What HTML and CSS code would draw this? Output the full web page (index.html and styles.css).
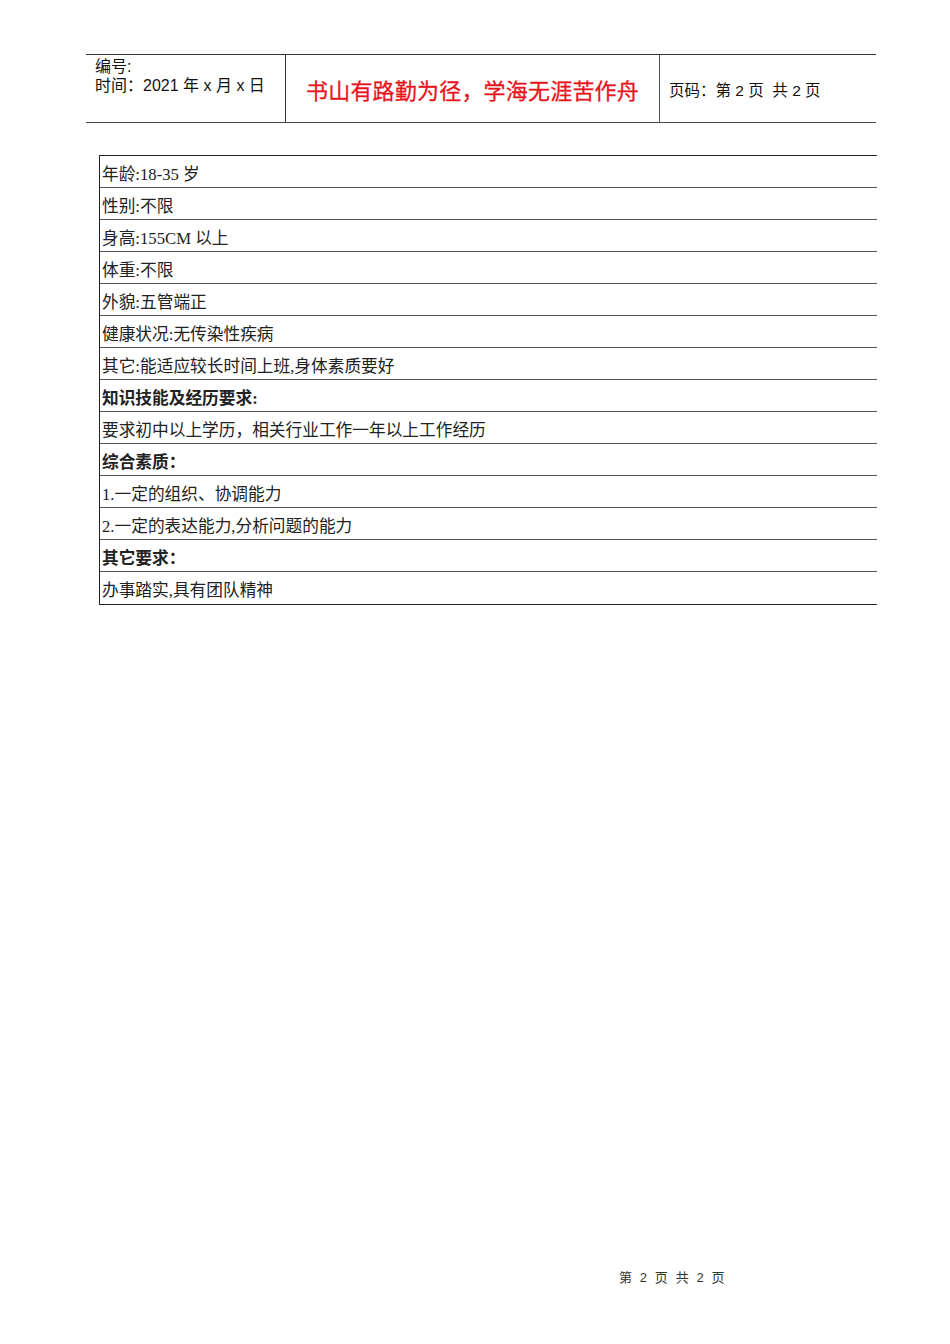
FILE: index.html
```html
<!DOCTYPE html>
<html lang="zh">
<head>
<meta charset="utf-8">
<link rel="stylesheet" href="styles.css">
</head>
<body>
<div class="page">
  <div class="header">
    <div class="cell cell-left">
      <div>编号:</div>
      <div>时间：2021 年 x 月 x 日</div>
    </div>
    <div class="cell cell-mid">书山有路勤为径，学海无涯苦作舟</div>
    <div class="cell cell-right">页码：第 2 页 &nbsp;共 2 页</div>
  </div>

  <div class="table">
    <div class="row">年龄:18-35 岁</div>
    <div class="row">性别:不限</div>
    <div class="row">身高:155CM 以上</div>
    <div class="row">体重:不限</div>
    <div class="row">外貌:五管端正</div>
    <div class="row">健康状况:无传染性疾病</div>
    <div class="row">其它:能适应较长时间上班,身体素质要好</div>
    <div class="row bold">知识技能及经历要求:</div>
    <div class="row">要求初中以上学历，相关行业工作一年以上工作经历</div>
    <div class="row bold">综合素质：</div>
    <div class="row">1.一定的组织、协调能力</div>
    <div class="row">2.一定的表达能力,分析问题的能力</div>
    <div class="row bold">其它要求：</div>
    <div class="row last">办事踏实,具有团队精神</div>
  </div>

  <div class="footer">第 2 页 共 2 页</div>
</div>
</body>
</html>
```

FILE: styles.css
```css
html, body {
  margin: 0;
  padding: 0;
  background: #fff;
}

.page {
  width: 950px;
  height: 1344px;
  position: relative;
  padding-top: 54px;
  box-sizing: border-box;
}

.header {
  margin-left: 86px;
  width: 790px;
  height: 69px;
  box-sizing: border-box;
  border-top: 1px solid #333;
  border-bottom: 1px solid #444;
  display: flex;
  font-family: "Liberation Sans", "Noto Sans CJK SC", sans-serif;
  color: #111;
}

.cell {
  box-sizing: border-box;
  height: 100%;
}

.cell-left {
  width: 200px;
  border-right: 1px solid #333;
  padding: 2px 0 0 9px;
  font-size: 16px;
  line-height: 19px;
}

.cell-mid {
  width: 374px;
  border-right: 1px solid #555;
  display: flex;
  align-items: center;
  justify-content: center;
  padding-top: 0;
  color: #e8141c;
  font-size: 22px;
  font-family: "Noto Sans CJK SC", sans-serif;
  letter-spacing: 0.2px;
  -webkit-text-stroke: 0.3px #e8141c;
}

.cell-right {
  flex: 1;
  display: flex;
  align-items: center;
  padding-left: 9px;
  padding-top: 0;
  font-size: 15.5px;
}

.table {
  margin-top: 32px;
  margin-left: 99px;
  width: 777px;
  border-top: 1px solid #222;
  border-left: 1px solid #222;
  font-family: "Liberation Serif", "Noto Sans CJK SC", serif;
  font-size: 16.7px;
  color: #222;
}

.row {
  height: 32px;
  box-sizing: border-box;
  border-bottom: 1px solid #555;
  padding: 6px 0 0 2px;
  line-height: 26px;
  white-space: nowrap;
}

.row.last {
  height: 33px;
  border-bottom-color: #222;
}

.row.bold {
  font-weight: bold;
}

.footer {
  position: absolute;
  left: 619px;
  top: 1267px;
  font-family: "Liberation Sans", "Noto Sans CJK SC", sans-serif;
  font-size: 13px;
  color: #333;
  word-spacing: 3px;
  letter-spacing: 0.6px;
}
```
